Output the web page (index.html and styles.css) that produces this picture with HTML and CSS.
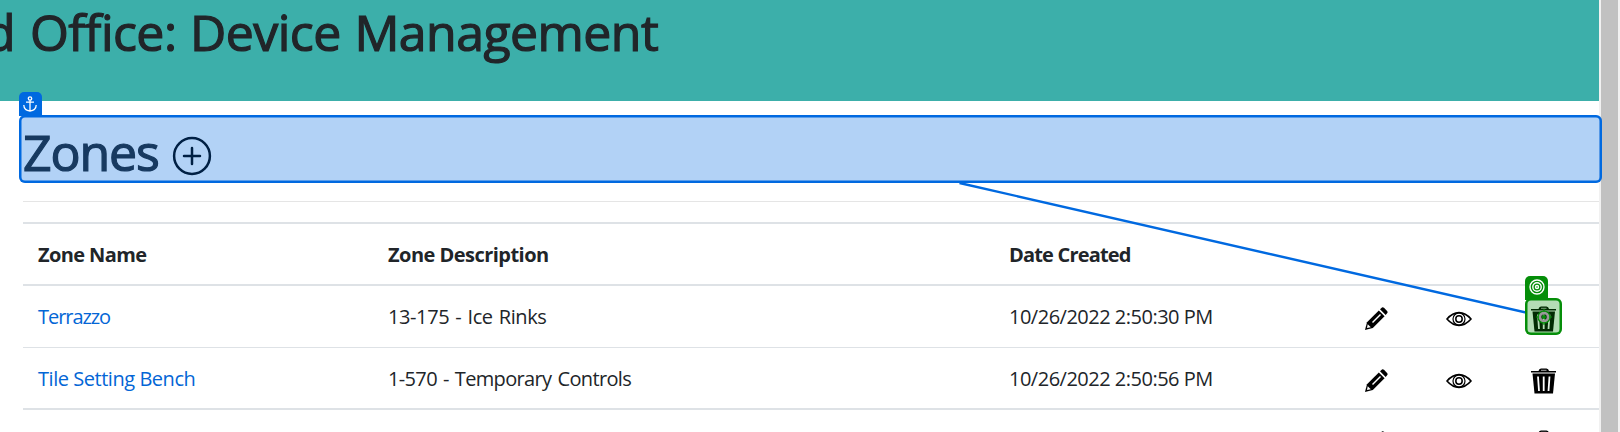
FILE: index.html
```html
<!DOCTYPE html>
<html lang="en">
<head>
<meta charset="utf-8">
<title>Device Management</title>
<link rel="stylesheet" href="styles.css">
</head>
<body>
<svg class="defs" aria-hidden="true">
  <symbol id="pencil" viewBox="0 0 24 24">
    <path d="M1 23 3 15.2 14.8 3.4 20.6 9.2 8.8 21Z"/>
    <path d="M16 2.2 18 .4Q19 0 20 .8L23.3 4.2Q24 5.2 23.3 6L21.7 8Z"/>
    <path d="M8.500 15.500 16.500 7.500" stroke="#fff" stroke-width="1.4"/>
    <path d="M3.700 17.200 6.800 20.300 3 21Z" fill="#fff"/>
  </symbol>
  <symbol id="eye" viewBox="0 0 26 16">
    <g fill="none" stroke="#000">
      <path d="M1 8Q6.5 1.6 13 1.6T25 8Q19.500 14.400 13 14.400T1 8Z" stroke-width="1.600"/>
      <circle cx="13" cy="8" r="6" stroke-width="1.200"/>
      <circle cx="13" cy="8" r="3.200" stroke-width="1.500"/>
    </g>
  </symbol>
  <symbol id="trash" viewBox="0 0 26 26">
    <path d="M0 3H7.500Q8 .5 10 .5H15.500Q17.500 .5 18 3H25V4.400H0Z"/>
    <path d="M1.500 5.500H24L22 25.500H3.500Z"/>
    <path d="M10 2.300H15.500" stroke="#aaa" stroke-width="1"/>
    <path d="M7 8.500 8 23M12.700 8.500V23M18.500 8.500 17.500 23" stroke="#fff" stroke-width="1.800"/>
  </symbol>
</svg>
<div class="page">
  <main class="content">
    <header class="banner"><h1 class="title"><span class="title-cut">d</span><span>Office: Device Management</span></h1></header>
    <section class="zones">
      <div class="heading">
        <h1 class="zones-title">Zones</h1>
        <svg class="plus" viewBox="0 0 40 40"><circle cx="20" cy="20" r="17.900"/><path d="M20 12V28M12 20H28"/></svg>
      </div>
      <div class="table">
        <div class="row head"><span class="h1">Zone Name</span><span class="h2">Zone Description</span><span class="h3">Date Created</span></div>
        <div class="row"><a class="t1">Terrazzo</a><span class="d1">13-175 - Ice Rinks</span><span class="date">10/26/2022 2:50:30 PM</span><svg class="pencil"><use href="#pencil"/></svg><svg class="eye"><use href="#eye"/></svg><svg class="trash"><use href="#trash"/></svg></div>
        <div class="row last"><a class="t2">Tile Setting Bench</a><span class="d2">1-570 - Temporary Controls</span><span class="date">10/26/2022 2:50:56 PM</span><svg class="pencil"><use href="#pencil"/></svg><svg class="eye"><use href="#eye"/></svg><svg class="trash"><use href="#trash"/></svg></div>
        <div class="row"><span></span><span></span><span></span><svg class="pencil"><use href="#pencil"/></svg><svg class="eye"><use href="#eye"/></svg><svg class="trash"><use href="#trash"/></svg></div>
      </div>
    </section>
  </main>
  <div class="scrollbar"></div>
  <svg class="link" viewBox="0 0 1620 432"><path d="M959.500 183 1526 312.500"/></svg>
  <div class="anchor-box"></div>
  <div class="anchor-tag"><svg viewBox="0 0 14 16"><circle cx="7" cy="2.500" r="1.700"/><path d="M7 4.200V14.500M3 6.200H11M.8 9Q1 14.500 7 15Q13 14.500 13.200 9"/></svg></div>
  <div class="target-box"></div>
  <div class="target-tag"><svg viewBox="0 0 16 16"><circle cx="8" cy="8" r="7"/><circle cx="8" cy="8" r="4.200"/><circle cx="8" cy="8" r="1.500"/></svg></div>
  <svg class="crosshair" viewBox="0 0 16 16"><circle cx="8" cy="8" r="4.200" class="ring"/><circle cx="8" cy="8" r="6"/><circle cx="8" cy="8" r="2" class="dot"/><path d="M8 0V3M8 13V16M0 8H3M13 8H16"/></svg>
</div>
</body>
</html>
```
FILE: styles.css
```css
* { box-sizing: border-box; }
body { margin: 0; background: #fff; color: #212529; font-family: "Open Sans", "Noto Sans", sans-serif; overflow: hidden; }
.defs { position: absolute; width: 0; height: 0; }
.page { position: relative; display: flex; width: 1620px; height: 432px; overflow: hidden; }
.content { width: 1599px; height: 432px; overflow: hidden; }
.scrollbar { width: 21px; background: #c1c1c1; border: solid #f1f1f1; border-width: 0 2px; }
.banner { height: 101px; background: #3cafaa; overflow: hidden; }
.title, .zones-title { margin: 0; font-size: 50px; font-weight: 400; line-height: 60px; white-space: nowrap; -webkit-text-stroke: 1.2px currentColor; }
.title { display: flex; padding-top: 2px; letter-spacing: -0.55px; word-spacing: 1.2px; }
.title-cut { width: 28px; margin-left: -15px; margin-right: 17px; }
.zones { padding: 21px 0 0 23px; }
.heading { display: flex; gap: 13px; height: 80px; border-bottom: 1px solid #e5e5e5; }
.zones-title { letter-spacing: -1.1px; width: 136px; }
.plus { width: 40px; height: 40px; margin-top: 14px; fill: none; stroke: #000; stroke-width: 2.5; stroke-linecap: round; }
.table { margin-top: 20px; border-top: 2px solid #dee2e6; }
.row { display: grid; grid-template-columns: 350px 621px 335px 83px 83px 104px; height: 62px; align-items: center; padding-left: 15px; border-bottom: 1px solid #dee2e6; font-size: 20px; line-height: 30px; white-space: nowrap; }
.head { font-weight: 700; border-bottom-width: 2px; padding-top: 2px; }
.last { border-bottom-width: 2px; }
.last span, .last a { padding-top: 2px; }
.h1 { letter-spacing: -0.6px; }
.h2 { letter-spacing: -0.53px; }
.h3 { letter-spacing: -0.82px; }
.t1 { letter-spacing: -1.05px; }
.t2 { letter-spacing: -0.46px; }
.d1 { letter-spacing: -0.4px; word-spacing: 1.3px; }
.d2 { letter-spacing: -0.65px; word-spacing: 1.5px; }
.date { letter-spacing: -0.5px; }
a { color: #0366d6; }
.pencil { width: 24px; height: 24px; margin-top: 5px; margin-left: 20px; }
.eye { width: 26px; height: 16px; margin-top: 5px; margin-left: 19px; }
.trash { width: 26px; height: 26px; margin-top: 5px; margin-left: 21px; }
.link { position: absolute; left: 0; top: 0; width: 1620px; height: 432px; fill: none; stroke: #0069e0; stroke-width: 2.4; }
.anchor-box { position: absolute; left: 19px; top: 115px; width: 1583px; height: 68px; box-shadow: inset 0 0 0 2.5px #0069e0; border-radius: 6px; background: rgba(0,105,224,.3); }
.anchor-tag { position: absolute; left: 19px; top: 92px; width: 23px; height: 24px; border-radius: 5px 5px 0 0; background: #0069e0; }
.anchor-tag svg { display: block; width: 14px; height: 16px; margin: 4px 0 0 4px; fill: none; stroke: #fff; stroke-width: 1.3; }
.target-box { position: absolute; left: 1525px; top: 298px; width: 36.5px; height: 37px; box-shadow: inset 0 0 0 2.5px #058e09; border-radius: 6px; background: rgba(5,142,9,.3); }
.target-tag { position: absolute; left: 1525px; top: 275.5px; width: 23px; height: 24px; border-radius: 5px 5px 0 0; background: #058e09; }
.target-tag svg { display: block; width: 16px; height: 16px; margin: 3px 3.5px; fill: none; stroke: #fff; stroke-width: 1.4; }
.crosshair { position: absolute; left: 1535.5px; top: 309px; width: 16px; height: 16px; fill: none; stroke: #058e09; stroke-width: 1.2; }
.ring { stroke: #999; stroke-width: 3; }
.dot { fill: #058e09; stroke: none; }
```
